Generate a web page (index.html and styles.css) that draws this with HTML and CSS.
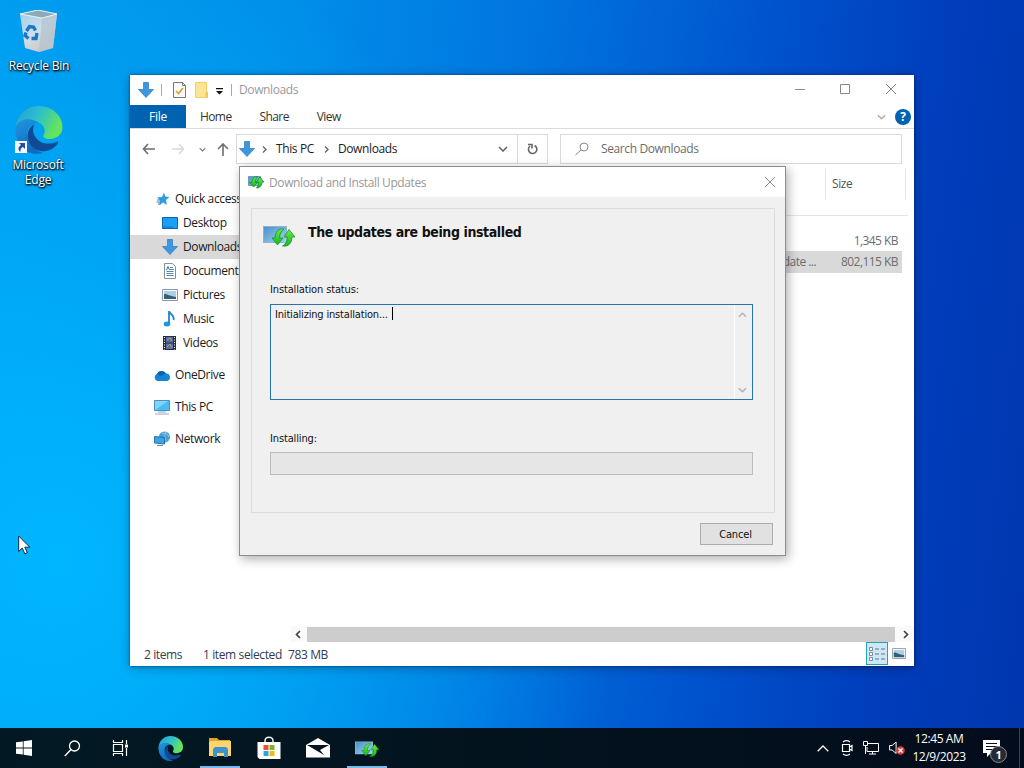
FILE: index.html
```
<!DOCTYPE html>
<html lang="en">
<head>
    <meta charset="UTF-8">
    <meta name="viewport" content="width=device-width, initial-scale=1.0">
    <title>Desktop</title>
    <link rel="stylesheet" href="styles.css">
</head>
<body>
    <!-- shared icons -->
    <svg class="defs" width="0" height="0">
        <defs>
            <linearGradient id="edgeTop" x1="0" y1="0" x2="1" y2="0.4">
                <stop offset="0" stop-color="#249bd8"/>
                <stop offset="0.5" stop-color="#2bbfcf"/>
                <stop offset="1" stop-color="#67e45a"/>
            </linearGradient>
            <linearGradient id="edgeLeft" x1="0" y1="0" x2="0.4" y2="1">
                <stop offset="0" stop-color="#2197e0"/>
                <stop offset="1" stop-color="#1068bf"/>
            </linearGradient>
            <linearGradient id="screen" x1="0" y1="0" x2="1" y2="1">
                <stop offset="0" stop-color="#4c91cc"/>
                <stop offset="1" stop-color="#9fd4ea"/>
            </linearGradient>
            <linearGradient id="green" x1="0" y1="0" x2="0" y2="1">
                <stop offset="0" stop-color="#69ee43"/>
                <stop offset="1" stop-color="#18b524"/>
            </linearGradient>
            <linearGradient id="bin" x1="0" y1="0" x2="0.6" y2="1">
                <stop offset="0" stop-color="#9fcdea"/>
                <stop offset="0.6" stop-color="#cfdfe9"/>
                <stop offset="1" stop-color="#d0c3c4"/>
            </linearGradient>
        </defs>
        <symbol id="edge" viewBox="0 0 48 48">
            <path d="M1 22C2 9 12 0 24 0c14 0 24 10 24 21 0 8-6 12-13 12-5 0-7-2-6-4 2-3 2-9-4-12C17 12 5 13 1 22z" fill="url(#edgeTop)"/>
            <path d="M1 21C5 12 17 11 24 17c-7-1-12 5-11 12 0 9 7 16 16 18C14 51 0 40 1 21z" fill="url(#edgeLeft)"/>
            <path d="M20 18c-7 4-9 13-4 21 6 8 19 9 27-1 1-2 1-3-1-2-8 3-17 2-21-5-3-4-3-9-1-13z" fill="#114a94"/>
        </symbol>
        <symbol id="down" viewBox="0 0 16 16">
            <path d="M5.5 .5h5v7h5L8 15.5.5 7.5h5z" fill="#3e97de" stroke="#2878b8" stroke-width=".7"/>
        </symbol>
        <symbol id="update" viewBox="0 0 32 24" preserveAspectRatio="none">
            <path d="M0 2h24v17H0z" fill="#8bb5cf"/>
            <path d="M1 3h22v15H1z" fill="url(#screen)"/>
            <path d="M21 5c-5-1-9 3-9 9H9l5.500 7L20 14h-3.500c0-4 1.500-6.500 4.500-9z" fill="url(#green)" stroke="#0b8d22" stroke-width=".7"/>
            <path d="M19.500 22c6 1 9.500-3 9.500-9h3l-6-7.500-5 7.500h3.500c0 4-1.500 7-5 9z" fill="url(#green)" stroke="#0b8d22" stroke-width=".7"/>
        </symbol>
        <symbol id="update-small" viewBox="0 0 16 14">
            <path d="M.5 1.500h12v9H.5z" fill="url(#screen)" stroke="#6a9ab8"/>
            <path d="M9.500 1.500C6 1.500 3.800 4 3.800 7.500H1.500L5.500 12l4-4.500H7.300c0-2.500.7-4 2.200-6z" fill="url(#green)" stroke="#0b8d22" stroke-width=".8"/>
            <path d="M8.500 13c3.500 0 5.500-2.500 5.500-6h1.800L12 2 8.500 7h2c0 2.500-.5 4-2 6z" fill="url(#green)" stroke="#0b8d22" stroke-width=".8"/>
        </symbol>
        <symbol id="picture" viewBox="0 0 16 12">
            <path d="M.5.5h15v11H.5z" fill="#fff" stroke="#8a9aa5"/>
            <path d="M2 2h12v8H2z" fill="#a8d2e9"/>
            <path d="M2 10V5c4 0 5 2 12 3v2z" fill="#355f73"/>
        </symbol>
        <symbol id="chevron" viewBox="0 0 10 6">
            <path d="M1 1l4 4 4-4" fill="none" stroke="currentColor" stroke-width="1.6"/>
        </symbol>
        <symbol id="close" viewBox="0 0 12 12">
            <path d="M1 1l10 10M11 1L1 11" fill="none" stroke="currentColor"/>
        </symbol>
    </svg>

    <div class="desktop">
        <div class="shortcut recycle">
            <svg width="42" height="44" viewBox="0 0 42 44">
                <path d="M2 4l18-4 19 4-4 34-14 4-14-4z" fill="url(#bin)"/>
                <path d="M2 4l18-4 19 4-15 4z" fill="#8fa9b8"/>
                <path d="M24 8l15-4-4 34-14 4z" fill="#b3c4cf" opacity=".75"/>
                <path d="M2 4l22 4 15-4M2 4l18-4 19 4" fill="none" stroke="#e7f2f6"/>
                <g fill="none" stroke="#1c78c4" stroke-width="3.4">
                    <path d="M8.500 21l3-4.500 4 .5 2 3.500"/>
                    <path d="M19 23l-1 5.500-4.500 0"/>
                    <path d="M10.500 28.500l-3.500-3 1-3"/>
                </g>
            </svg>
            <span>Recycle Bin</span>
        </div>
        <div class="shortcut edge">
            <svg class="edge-icon" width="49" height="48"><use href="#edge"/></svg>
            <svg class="shortcut-arrow" width="12" height="12" viewBox="0 0 12 12">
                <path d="M0 0h12v12H0z" fill="#f5f8fc"/>
                <path d="M4 2h6v6L8 6C6 7 5 8.500 5.500 11 2.500 9 3 6 6 4z" fill="#244fa3"/>
            </svg>
            <span>Microsoft<br>Edge</span>
        </div>

        <div class="window explorer">
            <div class="titlebar">
                <svg width="16" height="16"><use href="#down"/></svg>
                <i class="sep"></i>
                <svg class="check" width="13" height="16" viewBox="0 0 13 16">
                    <path d="M.5.5h9l3 3v12H.5z" fill="#fafafa" stroke="#777"/>
                    <path d="M9.500.5v3h3" fill="none" stroke="#777"/>
                    <path d="M3 9l2.500 2.500L10 6" fill="none" stroke="#d6a42b" stroke-width="1.700"/>
                </svg>
                <svg class="folder" width="13" height="16" viewBox="0 0 13 16">
                    <path d="M.5.5h11V9l1 2v4.500H.5z" fill="#ffe394" stroke="#f3cf6c"/>
                    <path d="M10.500 15.500V11l1.500-2 1 2v4.500z" fill="#f3c653"/>
                </svg>
                <svg class="more" width="7" height="7" viewBox="0 0 7 7">
                    <path d="M0 0h7v1.200H0zM0 3h7L3.500 6.500z" fill="#111"/>
                </svg>
                <i class="sep"></i>
                <span class="title">Downloads</span>
                <div class="controls">
                    <svg width="10" height="11" viewBox="0 0 10 11"><path d="M0 5.500h10" stroke="#888"/></svg>
                    <svg width="10" height="10" viewBox="0 0 10 10"><path d="M.5.5h9v9h-9z" fill="none" stroke="#888"/></svg>
                    <svg width="12" height="12"><use href="#close"/></svg>
                </div>
            </div>
            <div class="ribbon">
                <span class="tab active">File</span>
                <span class="tab">Home</span>
                <span class="tab">Share</span>
                <span class="tab">View</span>
                <div class="help">
                    <svg width="9" height="6"><use href="#chevron"/></svg>
                    <b>?</b>
                </div>
            </div>
            <div class="navbar">
                <div class="arrows">
                    <svg width="13" height="12" viewBox="0 0 13 12"><path d="M6 1L1.500 6 6 11M1.500 6H13" fill="none" stroke="#6e6e6e" stroke-width="1.600"/></svg>
                    <svg class="forward" width="13" height="12" viewBox="0 0 13 12"><path d="M7 1l4.500 5L7 11M11.500 6H0" fill="none" stroke="#d8d8d8" stroke-width="1.400"/></svg>
                    <svg class="recent" width="7" height="5"><use href="#chevron"/></svg>
                    <svg class="up" width="12" height="13" viewBox="0 0 12 13"><path d="M1 6l5-5 5 5M6 1v12" fill="none" stroke="#6e6e6e" stroke-width="1.600"/></svg>
                </div>
                <div class="address">
                    <svg width="16" height="16"><use href="#down"/></svg>
                    <svg class="crumb" width="5" height="7" viewBox="0 0 5 7"><path d="M1 .5l3 3-3 3" fill="none" stroke="#666" stroke-width="1.400"/></svg>
                    <span>This PC</span>
                    <svg class="crumb inner" width="5" height="7" viewBox="0 0 5 7"><path d="M1 .5l3 3-3 3" fill="none" stroke="#666" stroke-width="1.400"/></svg>
                    <span>Downloads</span>
                    <svg class="drop" width="10" height="6"><use href="#chevron"/></svg>
                    <div class="refresh">
                        <svg width="11" height="12" viewBox="0 0 11 12"><path d="M7.500 2.500A4.200 4.200 0 1 1 3 3M1 1.500h4v4" fill="none" stroke="#666" stroke-width="1.600"/></svg>
                    </div>
                </div>
                <div class="search">
                    <svg width="14" height="14" viewBox="0 0 14 14"><circle cx="9" cy="5" r="4" fill="none" stroke="#888"/><path d="M6 8l-5.500 5" stroke="#888"/></svg>
                    <span>Search Downloads</span>
                </div>
            </div>
            <div class="body">
                <ul class="sidebar">
                    <li class="root">
                        <svg width="16" height="16" viewBox="0 0 16 16"><path d="M10 1.500l1.300 4.100L15.500 6l-3.500 3 .8 5-3.700-2.500L5 14l1.400-4.500L3 6.500l5-.5z" fill="#2f9be0"/><path d="M3 9h4M2.500 11h4M4 13h3" stroke="#2b83c8"/></svg>
                        <span>Quick access</span>
                    </li>
                    <li>
                        <svg width="16" height="12" viewBox="0 0 16 12"><path d="M.5.500h15v11H.5z" fill="#18a0f5" stroke="#0b65b5"/><path d="M1 10h10" stroke="#1276c3"/></svg>
                        <span>Desktop</span>
                    </li>
                    <li class="selected">
                        <svg width="16" height="16"><use href="#down"/></svg>
                        <span>Downloads</span>
                    </li>
                    <li>
                        <svg width="16" height="16" viewBox="0 0 16 16"><path d="M2.500.5h8l3 3v12h-11z" fill="#fff" stroke="#8a8f94"/><path d="M8 4.500h3M8 6.500h4M4.500 8.500h7M4.500 10.500h7M4.500 12.500h7" stroke="#4a8cba"/><path d="M4.500 7L6 3.500 7.500 7" fill="none" stroke="#2878b8"/></svg>
                        <span>Documents</span>
                    </li>
                    <li>
                        <svg width="16" height="12"><use href="#picture"/></svg>
                        <span>Pictures</span>
                    </li>
                    <li>
                        <svg width="16" height="16" viewBox="0 0 16 16"><ellipse cx="5" cy="13" rx="3.300" ry="2.500" fill="#1b9be0"/><path d="M7 13V0c1 4 6 4 4.500 9" fill="none" stroke="#1b87d4" stroke-width="1.800"/></svg>
                        <span>Music</span>
                    </li>
                    <li>
                        <svg width="16" height="16" viewBox="0 0 16 16"><path d="M1 1h13v14H1z" fill="#2b2d36"/><path d="M4 2h7v5.500H4zM4 8.500h7V14H4z" fill="#586baa"/><path d="M5 5l3-2 2 3M5 12l3-3 2 4" fill="none" stroke="#a6aa59"/><path d="M2.500 2v13M12.500 2v13" stroke="#eee" stroke-dasharray="1 1.500"/></svg>
                        <span>Videos</span>
                    </li>
                    <li class="root spaced">
                        <svg width="16" height="11" viewBox="0 0 16 11" preserveAspectRatio="none"><path d="M3.500 11A3.700 3.700 0 0 1 3 4a5 5 0 0 1 9-.5A3.800 3.800 0 0 1 13 11z" fill="#1583d6"/><path d="M3 4a5 5 0 0 1 9-.5L6 6z" fill="#0a62b4"/></svg>
                        <span>OneDrive</span>
                    </li>
                    <li class="root spaced">
                        <svg width="16" height="15" viewBox="0 0 16 15"><path d="M.5.500h15v10H.5z" fill="#4abcf3" stroke="#4b91b9"/><path d="M1 10L14 1H1z" fill="#7fd5fa"/><path d="M4 12h8M1 14h14" stroke="#8eabbc"/></svg>
                        <span>This PC</span>
                    </li>
                    <li class="root spaced">
                        <svg width="16" height="16" viewBox="0 0 16 16"><circle cx="10.500" cy="6" r="5.500" fill="#4b9fd3"/><path d="M8 3c3-2 6 0 7 3M12 1c-2 3-1 6 0 9" fill="none" stroke="#a9dbf2" stroke-width=".7"/><path d="M.5 5.500l10 1v6.500l-10-1z" fill="#39a6e9" stroke="#2b74a4"/><path d="M3 14.500h6" stroke="#608ba5"/></svg>
                        <span>Network</span>
                    </li>
                </ul>
                <div class="files">
                    <div class="columns"><span>Size</span></div>
                    <div class="file"><span></span><span>1,345 KB</span></div>
                    <div class="file selected"><span>Update ...</span><span>802,115 KB</span></div>
                    <div class="scrollbar">
                        <svg width="6" height="9" viewBox="0 0 6 9"><path d="M5 1L1.500 4.500 5 8" fill="none" stroke="#444" stroke-width="1.700"/></svg>
                        <i></i>
                        <svg width="6" height="9" viewBox="0 0 6 9"><path d="M1 1l3.500 3.500L1 8" fill="none" stroke="#444" stroke-width="1.700"/></svg>
                    </div>
                </div>
            </div>
            <div class="statusbar">
                <span class="count">2 items</span>
                <span class="picked">1 item selected</span>
                <span>783 MB</span>
                <div class="views">
                    <div class="details">
                        <svg width="18" height="14" viewBox="0 0 18 14"><path d="M1.500.5h3v3h-3zM1.500 5.500h3v3h-3zM1.500 10.500h3v3h-3z" fill="#fff" stroke="#78909c"/><path d="M7 2h4M13 2h4M7 7h4M13 7h4M7 12h4M13 12h4" stroke="#62767f"/></svg>
                    </div>
                    <svg width="14" height="11" viewBox="0 0 16 12" preserveAspectRatio="none"><use href="#picture" width="16" height="12"/></svg>
                </div>
            </div>
        </div>

        <div class="window dialog">
            <div class="dialog-title">
                <svg width="16" height="14"><use href="#update-small"/></svg>
                <span>Download and Install Updates</span>
                <svg class="dialog-close" width="12" height="12"><use href="#close"/></svg>
            </div>
            <div class="panel">
                <div class="heading">
                    <svg width="32" height="24"><use href="#update"/></svg>
                    <h1>The updates are being installed</h1>
                </div>
                <label class="status-label">Installation status:</label>
                <div class="status">
                    <span class="log">Initializing installation...</span><i class="caret"></i>
                    <div class="status-scroll">
                        <svg class="flip" width="9" height="6"><use href="#chevron"/></svg>
                        <svg width="9" height="6"><use href="#chevron"/></svg>
                    </div>
                </div>
                <label class="progress-label">Installing:</label>
                <div class="progress"></div>
            </div>
            <button>Cancel</button>
        </div>

        <svg class="cursor" width="13" height="20" viewBox="0 0 13 20"><path d="M.7 1v15.500l3.600-3.400 2.500 5.700 2.500-1.100-2.500-5.500h5z" fill="#fff" stroke="#16283a"/></svg>

        <div class="taskbar">
            <div class="task small">
                <svg width="16" height="16" viewBox="0 0 16 16"><path d="M0 2.300L6.800 1.400v6.200H0zM7.600 1.300L16 0v7.600H7.600zM0 8.400h6.800v6.200L0 13.700zM7.600 8.400H16V16l-8.400-1.200z" fill="#fff"/></svg>
            </div>
            <div class="task small">
                <svg width="17" height="17" viewBox="0 0 17 17"><circle cx="10.500" cy="6" r="5" fill="none" stroke="#fff" stroke-width="1.300"/><path d="M7 9.500L.8 16" stroke="#fff" stroke-width="1.400"/></svg>
            </div>
            <div class="task view">
                <svg width="17" height="16" viewBox="0 0 17 16"><path d="M1.500 0v2.500h9V0M1.500 16v-2.500h9V16M1.500 4.500h9v7h-9zM14.500 0v4M14.500 8v8" fill="none" stroke="#fff" stroke-width="1.200"/><path d="M13 4.500h3v3h-3z" fill="#fff"/></svg>
            </div>
            <div class="task">
                <svg width="25" height="25"><use href="#edge"/></svg>
            </div>
            <div class="task open">
                <svg width="22" height="19" viewBox="0 0 22 19"><path d="M0 0h8l2 2h11v4H0z" fill="#e6a421"/><path d="M1 3h21v15H0V5z" fill="#fbd66f"/><path d="M4 19v-8l2-2h11l2 2v8h-4v-4H8v4z" fill="#3d92d4"/></svg>
            </div>
            <div class="task">
                <svg width="24" height="24" viewBox="0 0 24 24"><path d="M8 7V5c0-5 8-5 8 0v2" fill="none" stroke="#eee" stroke-width="1.500"/><path d="M.5 6h23v17h-21l-2-2z" fill="#fff"/><path d="M6.500 9h5v5h-5z" fill="#e9522c"/><path d="M12.500 9h5v5h-5z" fill="#7db52a"/><path d="M6.500 15h5v5h-5z" fill="#2ea4e8"/><path d="M12.500 15h5v5h-5z" fill="#f8b617"/></svg>
            </div>
            <div class="task">
                <svg width="24" height="20" viewBox="0 0 24 20"><path d="M0 7l12-7 12 7v12.500H0z" fill="#fff"/><path d="M1 7h22l-9 5 4 5z" fill="#06141e"/></svg>
            </div>
            <div class="task open">
                <svg class="updater" width="24" height="18"><use href="#update"/></svg>
            </div>
            <div class="tray">
                <svg class="expand" width="12" height="7" viewBox="0 0 12 7"><path d="M.7 6.300L6 1l5.300 5.300" fill="none" stroke="#fff" stroke-width="1.300"/></svg>
                <svg width="12" height="16" viewBox="0 0 12 16"><path d="M2 2c2-1.500 5-1.500 7 0M2 14c2 1.500 5 1.500 7 0M1.500 4.500h7v7h-7zM8.500 7L11 5.500v5L8.500 9" fill="none" stroke="#fff" stroke-width="1.200"/></svg>
                <svg width="16" height="14" viewBox="0 0 16 14"><path d="M5 2.500h10.500v8H4V6M9.500 10.500v2.500M6 13h7M.5.500h4v4h-4zM2.500 4.500V13" fill="none" stroke="#fff"/></svg>
                <svg class="sound" width="16" height="14" viewBox="0 0 16 14"><path d="M.6 4.500h2.500l4-3.500v11.500l-4-3.500H.6z" fill="none" stroke="#fff"/><circle cx="11.500" cy="9.500" r="4.300" fill="#d83b3d"/><path d="M9.500 7.500l4 4M13.500 7.500l-4 4" stroke="#fff" stroke-width="1.300"/></svg>
                <div class="clock">12:45 AM<br>12/9/2023</div>
                <div class="notify">
                    <svg width="17" height="17" viewBox="0 0 17 17"><path d="M0 0h17v13H8l-4 4v-4H0z" fill="#fff"/><path d="M3 3.500h11M3 6.500h11M3 9.500h8" stroke="#07111d"/></svg>
                    <b>1</b>
                </div>
                <i class="peek"></i>
            </div>
        </div>
    </div>
</body>
</html>
```
FILE: styles.css
```
* {
    box-sizing: border-box;
}

body, html {
    margin: 0;
    padding: 0;
    width: 100%;
    height: 100%;
    overflow: hidden;
    font-family: "Open Sans", "Noto Sans", sans-serif;
    font-size: 12px;
    line-height: 16px;
    letter-spacing: -0.38px;
    color: #1b1b1b;
}

svg {
    display: block;
    flex: none;
}

span {
    white-space: nowrap;
}

.defs {
    position: absolute;
}

.desktop {
    position: relative;
    width: 1024px;
    height: 768px;
    overflow: hidden;
    background:
        radial-gradient(ellipse 560px 620px at 60px 560px, rgba(0, 184, 255, 0.95), rgba(0, 170, 250, 0)),
        linear-gradient(97deg, #009bee 0%, #0090ea 25%, #0075df 48%, #0052cd 70%, #003fbd 84%, #0036ae 100%);
}

/* desktop icons */
.shortcut {
    position: absolute;
    width: 76px;
    display: flex;
    flex-direction: column;
    align-items: center;
    color: #fff;
    text-align: center;
    line-height: 15px;
    letter-spacing: -0.2px;
    text-shadow: 0 1px 2px #000, 1px 1px 2px #000;
}

.recycle {
    left: 1px;
    top: 10px;
    gap: 4px;
}

.edge {
    left: 0;
    top: 106px;
    gap: 3px;
}

.shortcut-arrow {
    position: absolute;
    left: 15px;
    top: 35px;
}

/* windows */
.window {
    position: absolute;
    display: flex;
    flex-direction: column;
}

.explorer {
    left: 130px;
    top: 75px;
    width: 784px;
    height: 591px;
    background: #fff;
    box-shadow: 0 0 2px rgba(0, 30, 80, 0.8), 0 2px 10px rgba(0, 0, 0, 0.3);
}

.titlebar {
    display: flex;
    align-items: center;
    height: 30px;
    padding-left: 8px;
}

.sep {
    width: 1px;
    height: 12px;
    margin-left: 7px;
    background: #aaa;
}

.check {
    margin-left: 11px;
}

.folder {
    margin-left: 9px;
}

.more {
    margin: 3px 1px 0 8px;
}

.title {
    margin-left: 7px;
    color: #999;
}

.controls {
    display: flex;
    align-items: center;
    gap: 35px;
    margin: -2px 17px 0 auto;
    color: #888;
}

.ribbon {
    display: flex;
    height: 24px;
    border-bottom: 1px solid #dadbdc;
    color: #333;
}

.tab {
    padding: 4px 14px;
    letter-spacing: -0.6px;
}

.tab.active {
    width: 56px;
    padding: 4px 0;
    background: #0063b1;
    color: #fff;
    letter-spacing: -0.2px;
    text-align: center;
}

.help {
    display: flex;
    align-items: center;
    gap: 9px;
    margin: 0 3px 0 auto;
    color: #aaa;
}

.help b {
    width: 16px;
    height: 16px;
    border-radius: 50%;
    background: #0063b1;
    color: #fff;
    text-align: center;
}

.navbar {
    display: flex;
    padding: 5px 12px 0 0;
    height: 40px;
}

.arrows {
    display: flex;
    align-items: center;
    width: 106px;
    height: 30px;
    padding-left: 12px;
    color: #777;
}

.forward {
    margin-left: 17px;
}

.recent {
    margin-left: 14px;
}

.up {
    margin-left: 11px;
}

.address {
    display: flex;
    align-items: center;
    width: 312px;
    height: 30px;
    padding-left: 2px;
    border: 1px solid #d9d9d9;
    color: #222;
}

.crumb {
    margin: 0 9px 0 7px;
}

.inner {
    margin-left: 10px;
}

.drop {
    margin-left: auto;
    color: #666;
}

.refresh {
    display: flex;
    align-items: center;
    justify-content: center;
    width: 30px;
    height: 28px;
    margin-left: 9px;
    border-left: 1px solid #d9d9d9;
}

.search {
    display: flex;
    align-items: center;
    gap: 12px;
    flex: 1;
    height: 30px;
    margin-left: 12px;
    padding-left: 14px;
    border: 1px solid #d9d9d9;
    color: #6d6d6d;
}

.body {
    display: flex;
    flex: 1;
}

.sidebar {
    width: 160px;
    margin: 0;
    padding: 18px 0 0;
    list-style: none;
}

.sidebar li {
    display: flex;
    align-items: center;
    gap: 5px;
    height: 24px;
    padding-left: 32px;
}

.sidebar .root {
    padding-left: 24px;
}

.sidebar .spaced {
    margin-top: 8px;
}

.sidebar .selected, .file.selected {
    background: #d9d9d9;
}

.files {
    display: flex;
    flex-direction: column;
    flex: 1;
    color: #6d6d6d;
}

.columns {
    display: flex;
    justify-content: flex-end;
    height: 47px;
    margin: 0 6px 14px 0;
    border-bottom: 1px solid #e5e5e5;
}

.columns span {
    width: 81px;
    height: 30px;
    margin-right: 2px;
    padding: 7px 6px;
    border: solid #e5e5e5;
    border-width: 0 1px;
    color: #555;
}

.file {
    display: flex;
    justify-content: flex-end;
    width: 612px;
    height: 21px;
    padding: 3px 4px;
    letter-spacing: -0.55px;
}

.file.selected {
    height: 22px;
}

.file span:last-child {
    width: 82px;
    text-align: right;
}

.scrollbar {
    display: flex;
    align-items: center;
    justify-content: space-between;
    height: 16px;
    margin-top: auto;
    padding: 0 5px;
    background: #fafafa;
}

.scrollbar i {
    width: 588px;
    height: 15px;
    margin-right: 2px;
    background: #cdcdcd;
}

.statusbar {
    display: flex;
    height: 24px;
    padding: 5px 4px 0 14px;
    color: #333b50;
}

.count {
    width: 59px;
}

.picked {
    width: 85px;
}

.views {
    display: flex;
    align-items: center;
    gap: 4px;
    height: 23px;
    margin: -5px 4px 0 auto;
}

.details {
    display: flex;
    align-items: center;
    justify-content: center;
    width: 22px;
    height: 23px;
    border: 1px solid #26a0b5;
    background: #cce8f5;
}

/* update dialog */
.dialog {
    left: 239px;
    top: 166px;
    width: 547px;
    height: 390px;
    border: 1px solid #8c8c8c;
    background: #f0f0f0;
    box-shadow: 2px 3px 10px rgba(0, 0, 0, 0.32);
    font-family: "DejaVu Sans Condensed", "DejaVu Sans", sans-serif;
    font-stretch: condensed;
    font-size: 11px;
    line-height: 13px;
    letter-spacing: -0.14px;
    color: #111;
}

.dialog-title {
    display: flex;
    align-items: center;
    gap: 5px;
    height: 30px;
    padding: 0 9px 0 8px;
    background: #fff;
    color: #999;
    font-family: "Open Sans", sans-serif;
    font-stretch: normal;
    font-size: 12px;
    letter-spacing: -0.38px;
}

.dialog-close {
    margin-left: auto;
    color: #888;
}

.panel {
    display: flex;
    flex-direction: column;
    width: 524px;
    height: 305px;
    margin: 11px 0 0 11px;
    padding: 0 21px 0 18px;
    border: 1px solid #dcdcdc;
}

.heading {
    display: flex;
    gap: 13px;
    height: 74px;
    margin-left: -7px;
    padding-top: 15px;
}

h1 {
    margin: 0;
    font-size: 14px;
    line-height: 16px;
    letter-spacing: -0.4px;
    white-space: nowrap;
}

.status {
    display: flex;
    width: 483px;
    height: 96px;
    margin-top: 8px;
    padding-left: 4px;
    border: 1px solid #2b73a8;
}

.log {
    padding-top: 3px;
    letter-spacing: -0.18px;
}

.caret {
    width: 1px;
    height: 13px;
    margin: 2px 0 0 4px;
    background: #000;
}

.status-scroll {
    display: flex;
    flex-direction: column;
    justify-content: space-between;
    width: 18px;
    margin-left: auto;
    padding: 7px 4px 6px 3px;
    border-left: 1px solid #fff;
    color: #b3b3b3;
}

.flip {
    transform: scaleY(-1);
}

.progress-label {
    margin-top: 32px;
}

.progress {
    width: 483px;
    height: 23px;
    margin-top: 7px;
    border: 1px solid #bcbcbc;
    background: #e6e6e6;
}

button {
    width: 73px;
    height: 22px;
    margin: 10px 12px 0 auto;
    padding: 0 2px 0 0;
    border: 1px solid #adadad;
    background: #e1e1e1;
    color: #111;
    font: inherit;
    letter-spacing: -0.14px;
}

.cursor {
    position: absolute;
    left: 18px;
    top: 535px;
}

/* taskbar */
.taskbar {
    position: absolute;
    left: 0;
    bottom: 0;
    display: flex;
    width: 1024px;
    height: 40px;
    background: linear-gradient(90deg, #021923, #03131e 50%, #030c1c);
}

.task {
    display: flex;
    align-items: center;
    justify-content: center;
    width: 48px;
    height: 40px;
    margin-right: 1px;
}

.small {
    margin-right: 0;
}

.view {
    margin-right: 2px;
}

.open {
    width: 40px;
    margin: 0 5px 0 4px;
    border-bottom: 2px solid #76b9ed;
}

.view + .task {
    margin-right: 2px;
}

.updater {
    margin-top: 3px;
}

.tray {
    display: flex;
    align-items: center;
    gap: 10px;
    margin-left: auto;
    color: #fff;
}

.expand {
    margin-right: 2px;
}

.clock {
    width: 56px;
    margin-left: -4px;
    line-height: 18px;
    text-align: center;
    letter-spacing: -0.4px;
}

.notify {
    position: relative;
    margin-left: 6px;
}

.notify b {
    position: absolute;
    left: 7px;
    top: 6px;
    width: 17px;
    height: 17px;
    border: 1px solid #888;
    border-radius: 50%;
    background: #252b35;
    font-size: 11px;
    line-height: 15px;
    text-align: center;
}

.peek {
    width: 1px;
    height: 40px;
    margin: 0 4px 0 9px;
    background: #3c4450;
}
```
